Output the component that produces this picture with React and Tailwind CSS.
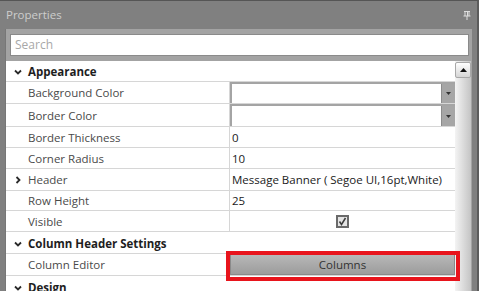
import React from 'react';

const font = { fontFamily: '"Open Sans", "Noto Sans", sans-serif' };

const ChevronDown = () => (
  <svg width="8" height="6" viewBox="0 0 8 6" className="shrink-0">
    <path d="M1 1.5 L4 4.5 L7 1.5" fill="none" stroke="#2a2a2a" strokeWidth="1.8" />
  </svg>
);

const ChevronRight = () => (
  <svg width="6" height="8" viewBox="0 0 6 8" className="shrink-0">
    <path d="M1.5 1 L4.5 4 L1.5 7" fill="none" stroke="#2a2a2a" strokeWidth="1.8" />
  </svg>
);

const Category = ({ label, h }) => (
  <div className={`flex items-center pt-[2px] border-b border-[#d6d6d6] ${h}`}>
    <div className="w-[22px] flex justify-center pl-[1px]">
      <ChevronDown />
    </div>
    <span className="text-[11.5px] font-bold text-[#1e1e1e]">{label}</span>
  </div>
);

const Prop = ({ label, h, expander, children }) => (
  <div className={`flex border-b border-[#d6d6d6] ${h}`}>
    <div className="w-[224px] flex items-center pt-[1px] border-r border-[#d6d6d6]">
      <div className="w-[22px] flex justify-center pl-[1px]">{expander && <ChevronRight />}</div>
      <span className="text-[11.5px] text-[#4a4a4a]">{label}</span>
    </div>
    <div className="flex-1 flex items-center min-w-0">{children}</div>
  </div>
);

const Value = ({ children }) => (
  <span className="pl-[2px] pt-[1px] text-[11.5px] text-[#1a1a1a] whitespace-nowrap">{children}</span>
);

const Combo = () => (
  <div className="w-full h-full flex border-t-2 border-l-2 border-[#a4a4a4] bg-white">
    <div className="flex-1" />
    <div className="w-[14px] bg-[#a6a6a6] border-l border-[#8c8c8c] flex items-center justify-center">
      <svg width="5" height="3" viewBox="0 0 5 3">
        <path d="M0 0 H5 L2.5 3 Z" fill="#333" />
      </svg>
    </div>
  </div>
);

export default function App() {
  return (
    <div className="w-[479px] h-[291px] overflow-hidden relative bg-[#808080] border-t border-t-[#555] border-r-2 border-r-[#5c5c5c]" style={font}>
      {/* title */}
      <div className="h-[28px] flex items-center justify-between pl-[6px] pr-[6px]">
        <span className="text-[11.5px] text-[#cdcdcd]">Properties</span>
        <svg width="8" height="9" viewBox="0 0 8 9">
          <path d="M1 0.5 H7 M2 0.5 V5 M6 0.5 V5 M4.5 0.5 V5 M0.5 5 H7.5 M4 5 V9" fill="none" stroke="#dedede" strokeWidth="1" />
        </svg>
      </div>
      {/* frame */}
      <div className="ml-[5px] w-[467px] bg-[#a3a3a3] border-l border-[#777]">
        <div className="pt-[5px] pb-[5px] pl-[4px] pr-[3px]">
          <div className="h-[22px] bg-white border border-[#8a8a8a] flex items-center pl-[4px]">
            <span className="text-[12px] text-[#a8a8a8]">Search</span>
          </div>
        </div>
        <div className="flex h-[300px]">
          {/* grid */}
          <div className="w-[449px] bg-white">
            <Category label="Appearance" h="h-[21px]" />
            <Prop label="Background Color" h="h-[22px]"><Combo /></Prop>
            <Prop label="Border Color" h="h-[23px]"><Combo /></Prop>
            <Prop label="Border Thickness" h="h-[21px]"><Value>0</Value></Prop>
            <Prop label="Corner Radius" h="h-[21px]"><Value>10</Value></Prop>
            <Prop label="Header" h="h-[22px]" expander>
              <Value>Message Banner ( Segoe UI,16pt,White)</Value>
            </Prop>
            <Prop label="Row Height" h="h-[20px]"><Value>25</Value></Prop>
            <Prop label="Visible" h="h-[21px]">
              <div className="flex-1 flex justify-center">
                <div className="w-[13px] h-[13px] border-2 border-[#6a6a6a] bg-[#e4e4e4] flex items-center justify-center">
                  <svg width="9" height="9" viewBox="0 0 9 9">
                    <path d="M1.5 4.5 L3.5 7.5 L7.5 1" fill="none" stroke="#3c3c3c" strokeWidth="1.5" />
                  </svg>
                </div>
              </div>
            </Prop>
            <Category label="Column Header Settings" h="h-[22px]" />
            <Prop label="Column Editor" h="h-[22px]">
              <div className="w-full h-full bg-gradient-to-b from-[#b8b8b8] to-[#9c9c9c] border border-[#8a8a8a] flex items-center justify-center">
                <span className="text-[11.5px] text-[#333]">Columns</span>
              </div>
            </Prop>
            <Category label="Design" h="h-[22px]" />
          </div>
          {/* scrollbar */}
          <div className="w-[16px] bg-gradient-to-r from-[#f4f4f4] to-[#c4c4c4] pt-[1px]">
            <div className="h-[16px] w-[16px] rounded-[2px] border border-[#a8a8a8] bg-gradient-to-b from-[#ffffff] to-[#d6d6d6] flex items-center justify-center">
              <svg width="7" height="4" viewBox="0 0 7 4">
                <path d="M0 4 H7 L3.5 0 Z" fill="#111" />
              </svg>
            </div>
          </div>
        </div>
      </div>
      {/* highlight */}
      <div className="absolute left-[226px] top-[250px] w-[234px] h-[30px] border-4 border-[#e8141c]" />
    </div>
  );
}
